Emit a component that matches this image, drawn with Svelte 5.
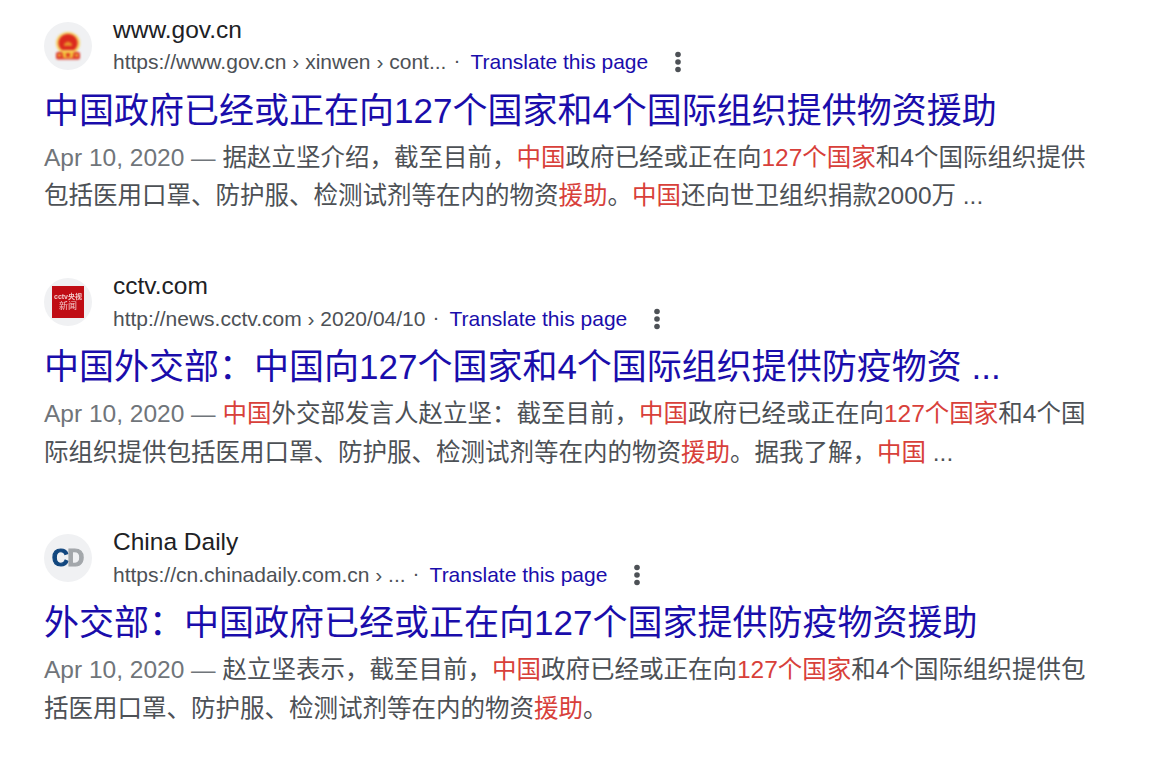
<script lang="ts">
  interface Part { t: string; hit?: boolean }
  interface Result {
    site: string;
    url: string;
    logo: string;
    title: string;
    date: string;
    lines: Part[][];
  }

  const h = (t: string): Part => ({ t, hit: true });
  const p = (t: string): Part => ({ t });

  const results: Result[] = [
    {
      site: 'www.gov.cn',
      url: 'https://www.gov.cn › xinwen › cont...',
      logo: 'gov',
      title: '中国政府已经或正在向127个国家和4个国际组织提供物资援助',
      date: 'Apr 10, 2020 — ',
      lines: [
        [p('据赵立坚介绍，截至目前，'), h('中国'), p('政府已经或正在向'), h('127个国家'), p('和4个国际组织提供')],
        [p('包括医用口罩、防护服、检测试剂等在内的物资'), h('援助'), p('。'), h('中国'), p('还向世卫组织捐款2000万 ...')]
      ]
    },
    {
      site: 'cctv.com',
      url: 'http://news.cctv.com › 2020/04/10',
      logo: 'cctv',
      title: '中国外交部：中国向127个国家和4个国际组织提供防疫物资 ...',
      date: 'Apr 10, 2020 — ',
      lines: [
        [h('中国'), p('外交部发言人赵立坚：截至目前，'), h('中国'), p('政府已经或正在向'), h('127个国家'), p('和4个国')],
        [p('际组织提供包括医用口罩、防护服、检测试剂等在内的物资'), h('援助'), p('。据我了解，'), h('中国'), p(' ...')]
      ]
    },
    {
      site: 'China Daily',
      url: 'https://cn.chinadaily.com.cn › ...',
      logo: 'cd',
      title: '外交部：中国政府已经或正在向127个国家提供防疫物资援助',
      date: 'Apr 10, 2020 — ',
      lines: [
        [p('赵立坚表示，截至目前，'), h('中国'), p('政府已经或正在向'), h('127个国家'), p('和4个国际组织提供包')],
        [p('括医用口罩、防护服、检测试剂等在内的物资'), h('援助'), p('。')]
      ]
    }
  ];
</script>

<main class="page">
  {#each results as r}
    <article class="result">
      <header class="head">
        <div class="favicon">
          {#if r.logo === 'gov'}
            <svg class="emblem" viewBox="0 0 26 28" width="26" height="28">
              <path d="M13 0 C20 0 25 5 25 11 C25 15 23 18 21 20 L5 20 C3 18 1 15 1 11 C1 5 6 0 13 0 Z" fill="#f6cf62" />
              <path d="M13 2 C18.5 2 22.5 6 22.5 11 C22.5 14 21 16.5 19 18 L7 18 C5 16.5 3.5 14 3.5 11 C3.5 6 7.500 2 13 2 Z" fill="#dc2a1e" />
              <path d="M9 12 Q13 7 17 12 L17 14 L9 14 Z" fill="#e88f2a" />
              <rect x="1" y="20" width="24" height="7.500" rx="2" fill="#de3a2a" />
              <path d="M7 20 H19 L17.500 26 H8.500 Z" fill="#f3bd3a" />
              <circle cx="13" cy="23" r="2" fill="#dc2a1e" />
              <rect x="3" y="22" width="2.500" height="2.500" fill="#f3bd3a" />
              <rect x="20.500" y="22" width="2.500" height="2.500" fill="#f3bd3a" />
            </svg>
          {:else if r.logo === 'cctv'}
            <div class="cctv">
              <span class="cctv-top">cctv央视</span>
              <span class="cctv-bottom">新闻</span>
            </div>
          {:else}
            <div class="cd"><span class="c">C</span><span class="d">D</span></div>
          {/if}
        </div>
        <div class="meta">
          <div class="site">{r.site}</div>
          <div class="url-row">
            <span class="url">{r.url}</span>
            <span class="dot">·</span>
            <span class="translate">Translate this page</span>
            <svg class="more" viewBox="0 0 8 24" width="8" height="24">
              <circle cx="4" cy="4.500" r="2.800" fill="#4d5156" />
              <circle cx="4" cy="12" r="2.800" fill="#4d5156" />
              <circle cx="4" cy="19.500" r="2.800" fill="#4d5156" />
            </svg>
          </div>
        </div>
      </header>
      <h3 class="title">{r.title}</h3>
      <div class="snippet">
        {#each r.lines as line, i}
          <div class="line">
            {#if i === 0}<span class="date">{r.date}</span>{/if}
            {#each line as part}<span class:hit={part.hit}>{part.t}</span>{/each}
          </div>
        {/each}
      </div>
    </article>
  {/each}
</main>

<style>
  :global(body) {
    margin: 0;
    background: #fff;
  }
  .page {
    width: 1156px;
    height: 767px;
    overflow: hidden;
    padding: 14px 0 0 44px;
    box-sizing: border-box;
    font-family: "Liberation Sans", "Noto Sans CJK SC", sans-serif;
    color: #4d5156;
  }
  .result {
    height: 256px;
  }
  .head {
    display: flex;
    align-items: center;
    gap: 21px;
    height: 64px;
  }
  .favicon {
    width: 48px;
    height: 48px;
    border-radius: 50%;
    background: #f0f1f3;
    display: flex;
    align-items: center;
    justify-content: center;
    flex-shrink: 0;
  }
  .emblem {
    filter: blur(0.8px);
  }
  .cctv {
    width: 32px;
    height: 32px;
    background: #c00d15;
    color: #f3c9c9;
    display: flex;
    flex-direction: column;
    align-items: center;
    justify-content: center;
    line-height: 1;
    white-space: nowrap;
    overflow: hidden;
    filter: blur(0.3px);
  }
  .cctv-top {
    font-size: 7px;
    font-weight: 700;
  }
  .cctv-bottom {
    font-size: 9px;
    margin-top: 2px;
  }
  .cd {
    display: flex;
    font-size: 23px;
    font-weight: 700;
    line-height: 1;
    font-family: "Liberation Sans", sans-serif;
    -webkit-text-stroke: 1.2px;
    filter: blur(0.3px);
  }
  .c {
    color: #12477f;
  }
  .d {
    color: #a3a7ab;
    margin-left: -1px;
  }
  .meta {
    display: flex;
    flex-direction: column;
  }
  .site {
    font-size: 24.5px;
    line-height: 32px;
    color: #202124;
  }
  .url-row {
    display: flex;
    align-items: center;
    height: 32px;
    font-size: 21px;
    white-space: nowrap;
  }
  .result + .result .url-row {
    margin-top: 1px;
    margin-bottom: -1px;
  }
  .dot {
    margin: 0 10px 0 7px;
    position: relative;
    top: -2px;
  }
  .translate {
    color: #1a0dab;
  }
  .more {
    margin-left: 26px;
  }
  .title {
    margin: 0;
    font-size: 35px;
    font-weight: 400;
    line-height: 44px;
    margin-top: 11px;
    color: #1a0dab;
    white-space: nowrap;
  }
  .snippet {
    margin-top: 6px;
    font-size: 24.5px;
    line-height: 38px;
    white-space: nowrap;
  }
  .result + .result .line + .line {
    margin-top: 1px;
  }
  .date {
    color: #70757a;
  }
  .hit {
    color: #d8403a;
  }
</style>
